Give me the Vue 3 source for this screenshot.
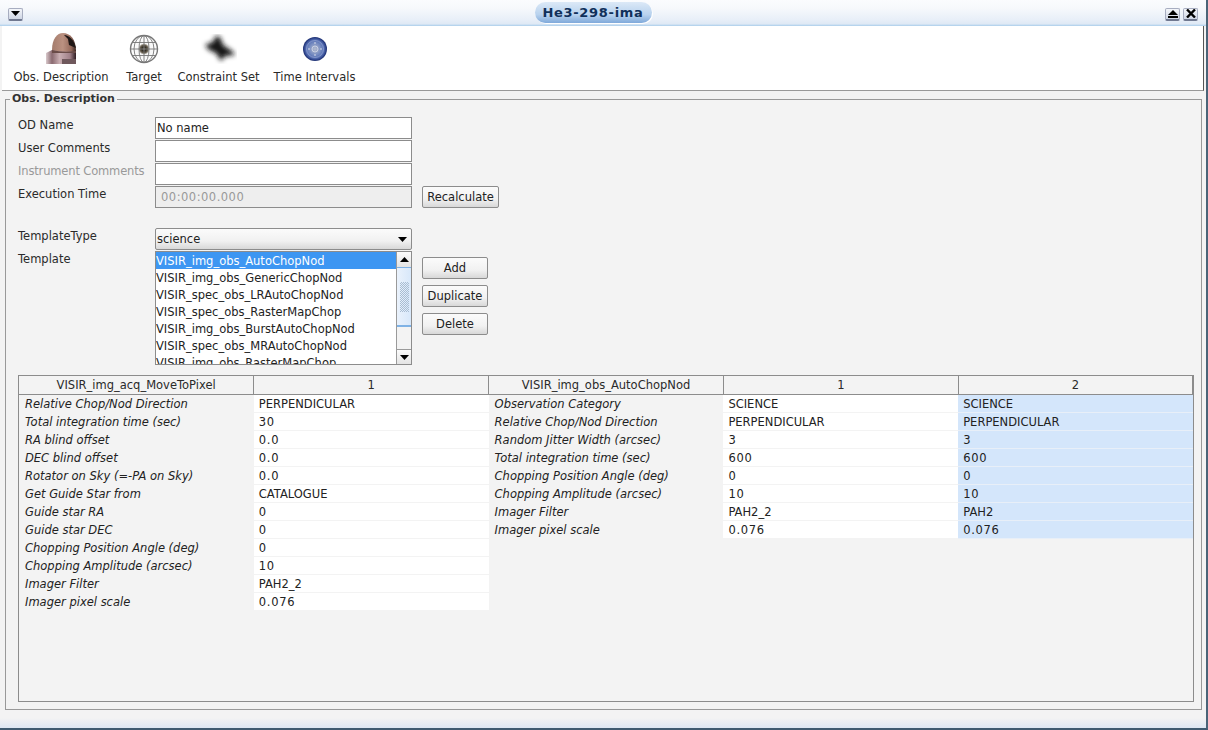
<script setup>
const tools = [
  { label: 'Obs. Description', icon: 'dome' },
  { label: 'Target', icon: 'globe' },
  { label: 'Constraint Set', icon: 'blob' },
  { label: 'Time Intervals', icon: 'clock' }
]
const forms = [
  { label: 'OD Name', value: 'No name' },
  { label: 'User Comments', value: '' },
  { label: 'Instrument Comments', value: '', dim: true },
  { label: 'Execution Time', value: '00:00:00.000', disabled: true }
]
const templates = [
  'VISIR_img_obs_AutoChopNod',
  'VISIR_img_obs_GenericChopNod',
  'VISIR_spec_obs_LRAutoChopNod',
  'VISIR_spec_obs_RasterMapChop',
  'VISIR_img_obs_BurstAutoChopNod',
  'VISIR_spec_obs_MRAutoChopNod',
  'VISIR_img_obs_RasterMapChop'
]
const left = [
  ['Relative Chop/Nod Direction', 'PERPENDICULAR'],
  ['Total integration time (sec)', '30'],
  ['RA blind offset', '0.0'],
  ['DEC blind offset', '0.0'],
  ['Rotator on Sky (=-PA on Sky)', '0.0'],
  ['Get Guide Star from', 'CATALOGUE'],
  ['Guide star RA', '0'],
  ['Guide star DEC', '0'],
  ['Chopping Position Angle (deg)', '0'],
  ['Chopping Amplitude (arcsec)', '10'],
  ['Imager Filter', 'PAH2_2'],
  ['Imager pixel scale', '0.076']
]
const right = [
  ['Observation Category', 'SCIENCE', 'SCIENCE'],
  ['Relative Chop/Nod Direction', 'PERPENDICULAR', 'PERPENDICULAR'],
  ['Random Jitter Width (arcsec)', '3', '3'],
  ['Total integration time (sec)', '600', '600'],
  ['Chopping Position Angle (deg)', '0', '0'],
  ['Chopping Amplitude (arcsec)', '10', '10'],
  ['Imager Filter', 'PAH2_2', 'PAH2'],
  ['Imager pixel scale', '0.076', '0.076']
]
const rows = left.map((l, i) => ({ l, r: right[i] || null }))
const isNum = (v) => /^[0-9.]+$/.test(v)
</script>

<template>
  <div class="window">
    <header class="titlebar">
      <button class="wbtn"><svg width="9" height="5" viewBox="0 0 9 5"><path d="M0 0h9L4.500 5z" fill="#000"/></svg></button>
      <div class="spacer"><div class="title">He3-298-ima</div></div>
      <div class="wbtns">
        <button class="wbtn"><svg width="10" height="8" viewBox="0 0 10 8"><path d="M5 0l5 5H0z" fill="#000"/><rect y="6" width="10" height="2" fill="#000"/></svg></button>
        <button class="wbtn"><svg width="10" height="9" viewBox="0 0 10 9"><path d="M1 0.500l8 8M9 0.500l-8 8" stroke="#000" stroke-width="2.400"/></svg></button>
      </div>
    </header>

    <nav class="toolbar">
      <div v-for="t in tools" :key="t.label" class="tool">
        <div class="icon">
          <svg v-if="t.icon === 'dome'" width="32" height="31" viewBox="0 0 32 31">
            <defs>
              <linearGradient id="d1" x1="0" x2="1" y1="0" y2="0">
                <stop offset="0" stop-color="#a47c6c"/><stop offset=".45" stop-color="#bb9181"/><stop offset=".8" stop-color="#94695b"/><stop offset="1" stop-color="#3a2622"/>
              </linearGradient>
              <linearGradient id="d2" x1="0" x2="1" y1="0" y2="0">
                <stop offset="0" stop-color="#d9c9cc"/><stop offset=".2" stop-color="#8a6a70"/><stop offset=".45" stop-color="#c9aeb2"/><stop offset=".8" stop-color="#a08088"/><stop offset="1" stop-color="#2e1d22"/>
              </linearGradient>
            </defs>
            <path d="M1 31V20l6-3h24v14z" fill="url(#d2)"/>
            <path d="M7 17C7 6 12 0 18 0c7 0 13 6 13 18-8 1-16 1-24-1z" fill="url(#d1)"/>
            <path d="M19 2c5 0 10 5 12 13l-7-3-1-6z" fill="#1f1716"/>
            <path d="M7 17c8 2 16 2 24 1v2H7z" fill="#6a4c48"/>
            <rect x="17" y="26" width="14" height="5" fill="#6f585c"/>
          </svg>
          <svg v-else-if="t.icon === 'globe'" width="30" height="30" viewBox="0 0 30 30">
            <defs>
              <radialGradient id="g1" cx=".5" cy=".5" r=".5">
                <stop offset="0" stop-color="#8d8674"/><stop offset=".14" stop-color="#2e2a22"/><stop offset=".3" stop-color="#6b6252"/><stop offset=".42" stop-color="#f6f6f6"/><stop offset="1" stop-color="#fff"/>
              </radialGradient>
            </defs>
            <circle cx="15" cy="15" r="13.500" fill="url(#g1)" stroke="#777" stroke-width="1.400"/>
            <g fill="none" stroke="#777" stroke-width=".9">
              <ellipse cx="15" cy="15" rx="5" ry="13.500"/>
              <ellipse cx="15" cy="15" rx="10" ry="13.500"/>
              <path d="M15 1.500v27M1.500 15h27M3 8.500h24M3 21.500h24"/>
            </g>
          </svg>
          <svg v-else-if="t.icon === 'blob'" width="36" height="30" viewBox="0 0 36 30">
            <defs><filter id="b1" x="-40%" y="-40%" width="180%" height="180%"><feGaussianBlur stdDeviation="2.500"/></filter></defs>
            <path d="M4 11l8-3 3-6 4 1 3 8 9 6 3 4-10 1-4 5-5-8-7-3z" fill="#141414" filter="url(#b1)"/>
          </svg>
          <svg v-else width="26" height="26" viewBox="0 0 26 26">
            <defs>
              <radialGradient id="c1" cx=".5" cy=".5" r=".5">
                <stop offset="0" stop-color="#b4bccf"/><stop offset=".55" stop-color="#6f86bf"/><stop offset=".8" stop-color="#4a63a8"/><stop offset=".92" stop-color="#2a3f86"/><stop offset="1" stop-color="#1e3070"/>
              </radialGradient>
            </defs>
            <circle cx="13" cy="13" r="12" fill="url(#c1)"/>
            <circle cx="13" cy="13" r="8.500" fill="none" stroke="#8ea0d2" stroke-width=".8"/>
            <circle cx="13" cy="13" r="3" fill="none" stroke="#d6dbe8" stroke-width=".8"/>
            <path d="M13 6v2M13 18v2M6 13h2M18 13h2" stroke="#d6dbe8" stroke-width="1"/>
          </svg>
        </div>
        <span class="tool-label">{{ t.label }}</span>
      </div>
    </nav>

    <main class="main">
      <fieldset class="group">
        <legend>Obs. Description</legend>

        <div class="form">
          <div class="labels">
            <div v-for="f in forms" :key="f.label" class="lbl" :class="{ dim: f.dim }">{{ f.label }}</div>
          </div>
          <div class="fields">
            <div v-for="f in forms" :key="f.label" class="field" :class="{ disabled: f.disabled }">{{ f.value }}</div>
          </div>
          <button class="btn recalc">Recalculate</button>
        </div>

        <div class="tpl">
          <div class="labels">
            <div class="lbl">TemplateType</div>
            <div class="lbl">Template</div>
          </div>
          <div class="tpl-mid">
            <div class="combo">
              <span>science</span>
              <svg width="9" height="5" viewBox="0 0 9 5"><path d="M0 0h9L4.500 5z" fill="#000"/></svg>
            </div>
            <div class="list">
              <div class="items">
                <div v-for="(t, i) in templates" :key="t" class="item" :class="{ sel: i === 0 }">{{ t }}</div>
              </div>
              <div class="scroll">
                <div class="arrow"><svg width="9" height="5" viewBox="0 0 9 5"><path d="M0 5h9L4.500 0z" fill="#000"/></svg></div>
                <div class="thumb"><div class="grip"></div></div>
                <div class="track"></div>
                <div class="arrow down"><svg width="9" height="5" viewBox="0 0 9 5"><path d="M0 0h9L4.500 5z" fill="#000"/></svg></div>
              </div>
            </div>
          </div>
          <div class="actions">
            <button class="btn act">Add</button>
            <button class="btn act">Duplicate</button>
            <button class="btn act">Delete</button>
          </div>
        </div>

        <div class="tablewrap">
          <table>
            <thead>
              <tr>
                <th>VISIR_img_acq_MoveToPixel</th>
                <th>1</th>
                <th>VISIR_img_obs_AutoChopNod</th>
                <th>1</th>
                <th>2</th>
              </tr>
            </thead>
            <tbody>
              <tr v-for="(row, i) in rows" :key="i">
                <td class="name">{{ row.l[0] }}</td>
                <td class="val" :class="{ num: isNum(row.l[1]) }">{{ row.l[1] }}</td>
                <template v-if="row.r">
                  <td class="name">{{ row.r[0] }}</td>
                  <td class="val" :class="{ num: isNum(row.r[1]) }">{{ row.r[1] }}</td>
                  <td class="val blue" :class="{ num: isNum(row.r[2]) }">{{ row.r[2] }}</td>
                </template>
                <template v-else>
                  <td></td><td></td><td></td>
                </template>
              </tr>
            </tbody>
          </table>
        </div>
      </fieldset>
    </main>
    <footer class="bottom"></footer>
  </div>
</template>

<style>
html, body { margin: 0; background: #fff; }
</style>

<style scoped>
.window {
  width: 1208px;
  height: 730px;
  box-sizing: border-box;
  display: flex;
  flex-direction: column;
  font: 12px "DejaVu Sans", sans-serif;
  color: #222;
  background: #f3f3f3;
  border-bottom: 2px solid #3f5a70;
  border-right: 2px solid #4a6478;
  overflow: hidden;
}
.titlebar {
  height: 26px;
  flex: none;
  box-sizing: border-box;
  display: flex;
  align-items: center;
  padding: 2px 8px 0 8px;
  background: linear-gradient(#fbfcfe 0, #f7f9fc 30%, #e8eff8 75%, #dfe9f5 92%, #a9cdeb 100%);
}
.spacer { flex: 1; display: flex; justify-content: center; padding-right: 2px; }
.title {
  width: 117px;
  height: 21px;
  line-height: 21px;
  margin-top: -3px;
  text-align: center;
  font-weight: bold;
  font-size: 13px;
  letter-spacing: 0.7px;
  color: #10305a;
  border-radius: 11px;
  background: linear-gradient(#dce9f7, #b8d2ee 60%, #7fa9da);
  box-shadow: 1px 1px 0 #fff;
}
.wbtns { display: flex; gap: 3px; }
.wbtn {
  width: 15px;
  height: 13px;
  padding: 0;
  display: flex;
  align-items: center;
  justify-content: center;
  background: linear-gradient(#f4f6fa, #cfd6e4);
  border: 1px solid #a7adc0;
  border-bottom: 2px solid #6f7890;
  border-radius: 2px;
  box-sizing: border-box;
}
.toolbar {
  height: 65px;
  flex: none;
  box-sizing: border-box;
  display: flex;
  gap: 16px;
  margin-left: 2px;
  margin-right: 2px;
  padding: 6px 0 0 11px;
  background: #fff;
  border-bottom: 1px solid #999;
  border-right: 1px solid #555;
}
.tool { display: flex; flex-direction: column; align-items: center; }
.tool:nth-child(1) { width: 96px; }
.tool:nth-child(2) { width: 38px; }
.tool:nth-child(3) { width: 79px; }
.tool:nth-child(4) { width: 81px; }
.icon { height: 33px; display: flex; align-items: center; justify-content: center; }
.tool-label { margin-top: 4px; font-size: 11.500px; line-height: 16px; white-space: nowrap; color: #2a2a2a; }
.main { flex: 1; min-height: 0; padding: 0 3px 0 5px; }
.group {
  margin: 0;
  height: 619px;
  box-sizing: border-box;
  border: 1px solid #999;
  padding: 0 7px 7px 12px;
  min-width: 0;
  width: 1197px;
}
legend {
  margin-left: -8px;
  padding: 0 2px;
  font-weight: bold;
  font-size: 11px;
  line-height: 16px;
  color: #333;
}
.form { display: flex; margin-top: 10px; }
.labels { width: 137px; flex: none; }
.lbl { height: 23px; line-height: 16px; font-size: 11.500px; color: #2a2a2a; white-space: nowrap; }
.dim { color: #999; letter-spacing: -0.15px; }
.fields { display: flex; flex-direction: column; gap: 1px; width: 257px; }
.field {
  height: 22px;
  box-sizing: border-box;
  border: 1px solid #8c8c8c;
  background: #fff;
  padding-left: 1px;
  line-height: 20px;
  font-size: 11.500px;
}
.field.disabled { background: #eeeeee; color: #999; padding-left: 5px; letter-spacing: 0.5px; }
.btn {
  font: 11.500px "DejaVu Sans", sans-serif;
  color: #222;
  border: 1px solid #8c8c8c;
  border-radius: 2px;
  height: 22px;
  padding: 0;
  background: linear-gradient(#fbfbfb, #f1f1f1 60%, #d8d8d8);
}
.recalc { width: 77px; margin: 69px 0 0 10px; }
.tpl { display: flex; margin-top: 19px; }
.tpl-mid { width: 257px; }
.combo {
  height: 22px;
  box-sizing: border-box;
  border: 1px solid #8c8c8c;
  border-radius: 2px;
  background: linear-gradient(#fbfbfb, #f1f1f1 60%, #d8d8d8);
  display: flex;
  align-items: center;
  justify-content: space-between;
  padding: 0 4px 0 1px;
  font-size: 11.500px;
}
.list {
  height: 114px;
  margin-top: 1px;
  box-sizing: border-box;
  border: 1px solid #8c8c8c;
  background: #fff;
  display: flex;
  overflow: hidden;
}
.items { flex: 1; min-width: 0; overflow: hidden; }
.item { height: 17px; line-height: 19px; font-size: 11.500px; white-space: nowrap; overflow: hidden; }
.sel { background: #3d96f2; color: #fff; }
.scroll { width: 15px; flex: none; display: flex; flex-direction: column; border-left: 1px solid #9a9a9a; box-sizing: border-box; background: #f3f3f3; }
.arrow { height: 15px; flex: none; display: flex; align-items: center; justify-content: center; background: linear-gradient(#fbfbfb, #e4e4e4); }
.arrow.down { border-top: 1px solid #9a9a9a; box-sizing: border-box; }
.thumb {
  height: 60px;
  flex: none;
  box-sizing: border-box;
  background: linear-gradient(90deg, #eaf2fc, #d8e8fa);
  border-top: 1px solid #7fb2e5;
  border-bottom: 2px solid #7fb2e5;
  display: flex;
  align-items: center;
  justify-content: center;
}
.grip {
  width: 9px;
  height: 30px;
  background: repeating-conic-gradient(#a9bdd2 0 25%, transparent 0 50%) 0 0 / 2px 2px;
}
.track { flex: 1; }
.actions { display: flex; flex-direction: column; gap: 6px; margin: 29px 0 0 10px; }
.act { width: 66px; }
.tablewrap {
  margin-top: 10px;
  height: 327px;
  width: 1176px;
  box-sizing: border-box;
  border: 1px solid #8c8c8c;
  overflow: hidden;
}
table {
  border-collapse: collapse;
  table-layout: fixed;
  width: 1175px;
  font-size: 11.500px;
}
th {
  height: 18px;
  padding: 0;
  font-weight: normal;
  color: #2a2a2a;
  text-align: center;
  border-right: 1px solid #8c8c8c;
  border-bottom: 1px solid #8c8c8c;
  background: #f3f3f3;
}
th:last-child { border-right: 2px solid #8c8c8c; }
td {
  height: 17px;
  padding: 0 0 0 5px;
  white-space: nowrap;
  overflow: hidden;
  border-bottom: 1px solid transparent;
}
.name { font-style: italic; padding-left: 6px; }
.val { background: #fff; border-bottom-color: #f3f3f3; }
.num { letter-spacing: 0.7px; }
.blue { background: #d4e6fb; border-bottom-color: #e8eff8; }
.bottom {
  height: 10px;
  flex: none;
  background: linear-gradient(#f3f3f3, #dde6f2);
}
</style>
